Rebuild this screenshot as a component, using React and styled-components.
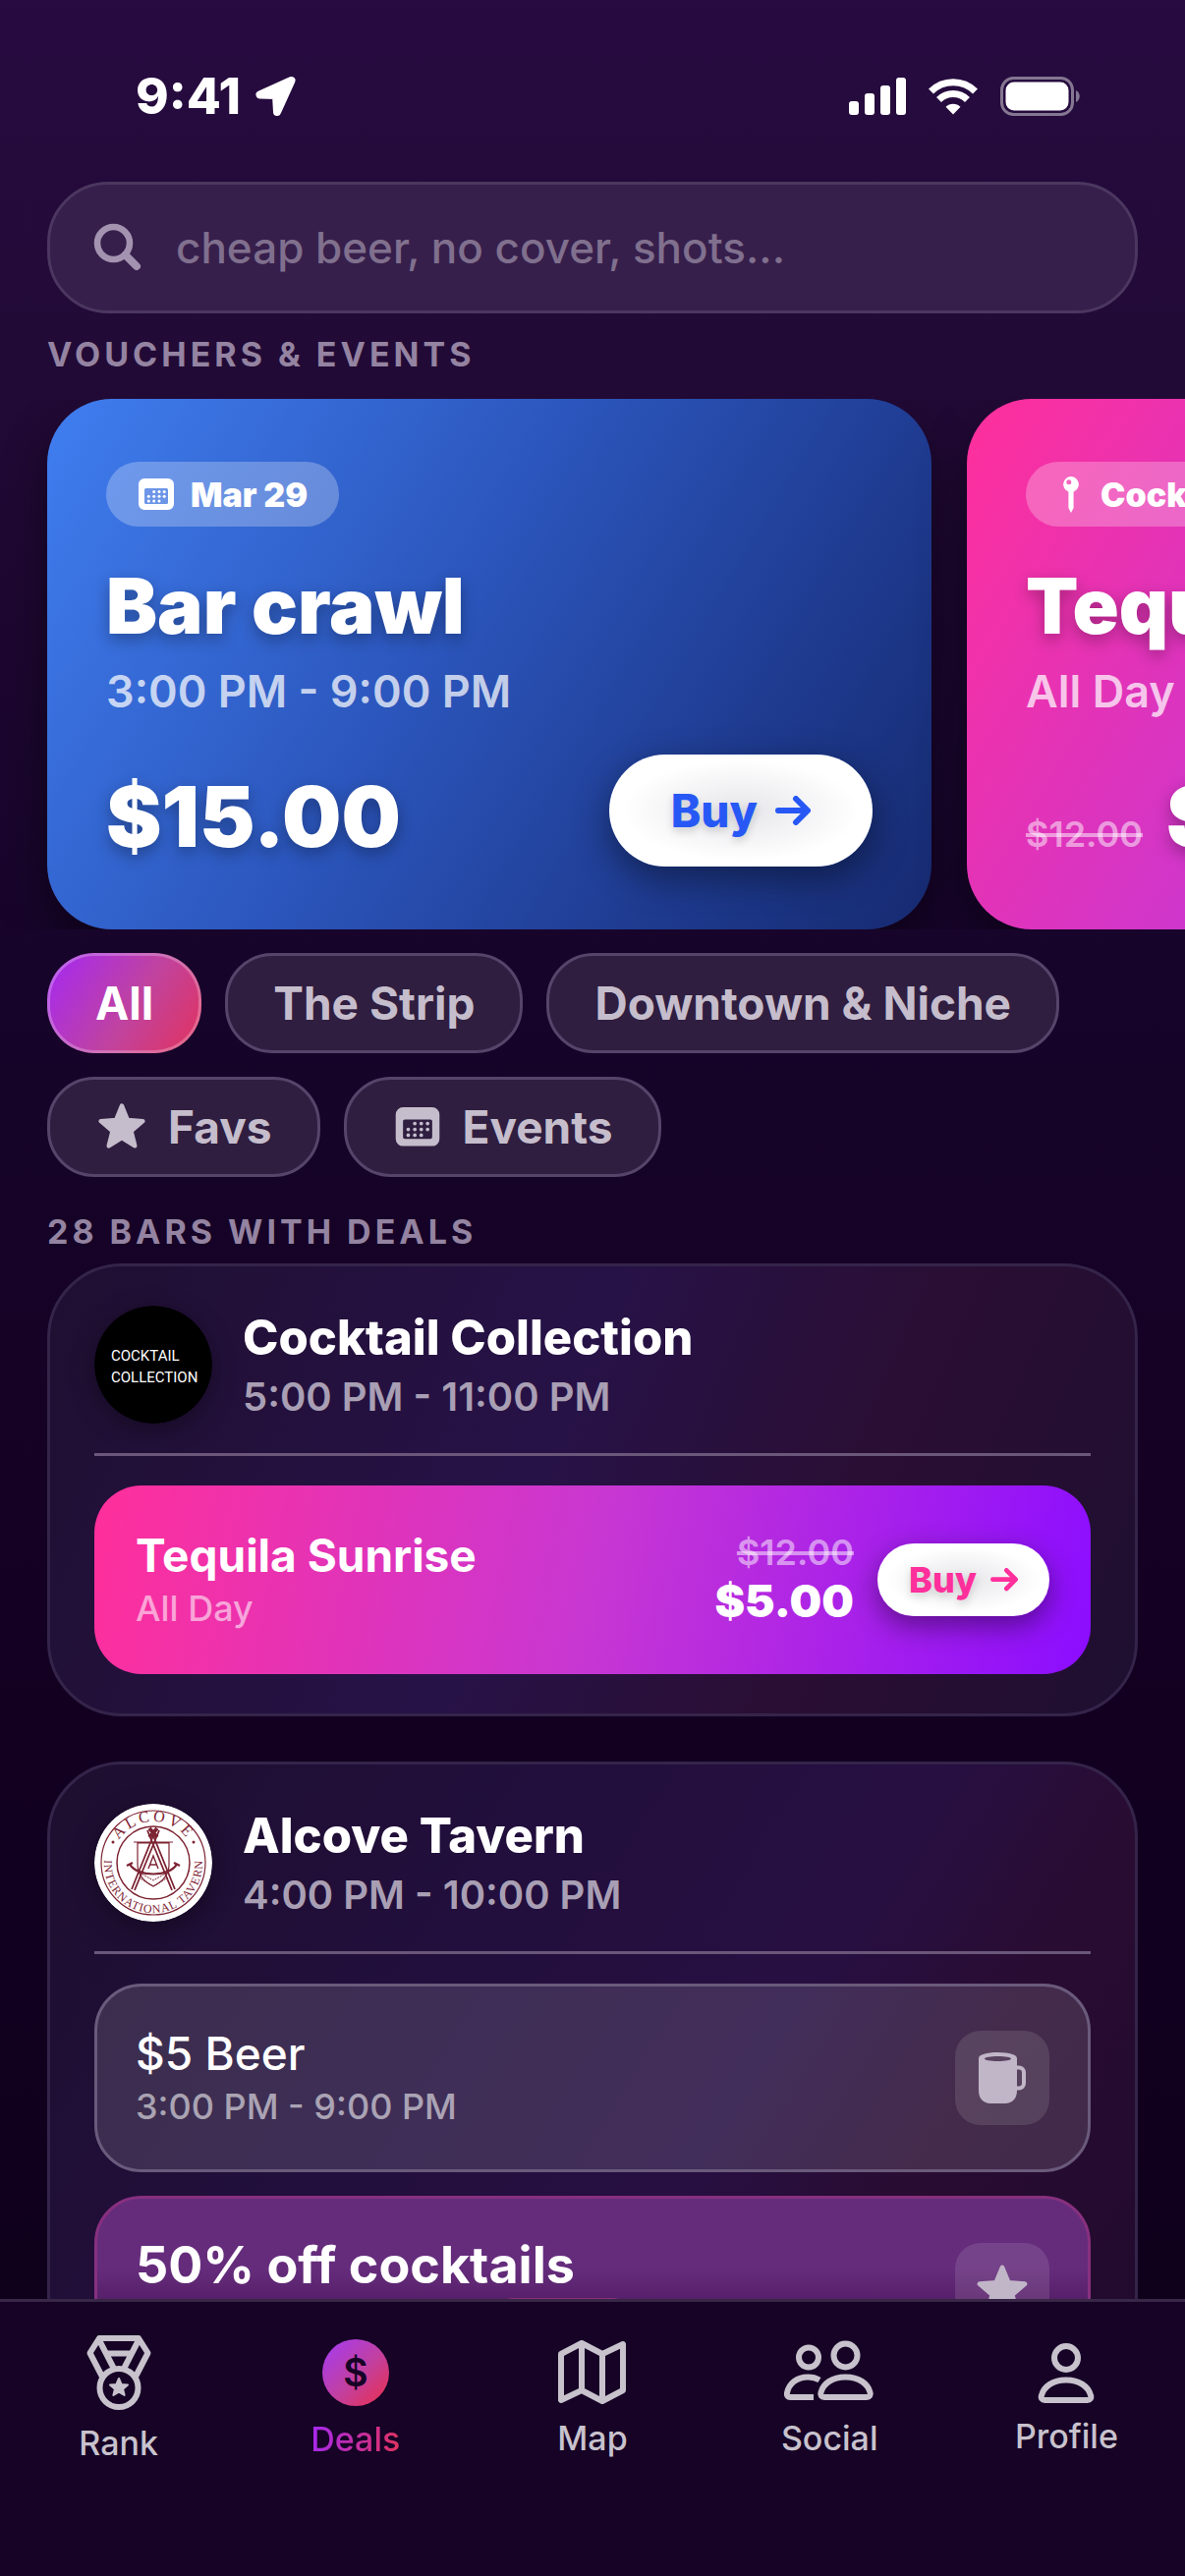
import styled, { createGlobalStyle, css } from 'styled-components';

const GlobalStyle = createGlobalStyle`
  * {
    box-sizing: border-box;
  }
  body {
    margin: 0;
    background: #160326;
    font-family: Inter, Roboto, "Liberation Sans", sans-serif;
    color: #fff;
  }
  h1, h2, h3, p, ul {
    margin: 0;
    padding: 0;
  }
  ul {
    list-style: none;
  }
  button, input {
    font-family: inherit;
  }
  svg {
    display: block;
    flex-shrink: 0;
  }
`;

const Screen = styled.div`
  height: 100vh;
  display: flex;
  flex-direction: column;
  background: linear-gradient(180deg, #270b41 0%, #220a36 14%, #17042a 38%, #130021 66%, #0f001c 90%);
`;

const StatusBar = styled.header`
  display: flex;
  align-items: center;
  justify-content: space-between;
  padding: 66px 106px 55px 138px;
`;

const StatusGroup = styled.div`
  display: flex;
  align-items: center;
  gap: ${({ $gap }) => $gap}px;
`;

const Clock = styled.span`
  font-size: 51px;
  line-height: 64px;
  font-weight: 800;
`;

const Content = styled.main`
  flex: 1;
  min-height: 0;
  overflow-y: auto;
  scrollbar-width: none;
`;

const SearchBox = styled.label`
  display: flex;
  align-items: center;
  gap: 34px;
  height: 134px;
  margin: 0 48px;
  padding: 0 44px;
  border: 3px solid #4b375f;
  border-radius: 62px;
  background: #371f4c;
  color: #a393b0;
`;

const SearchInput = styled.input`
  flex: 1;
  min-width: 0;
  padding: 0;
  border: none;
  outline: none;
  background: transparent;
  color: #fff;
  font-size: 44px;
  font-weight: 500;

  &::placeholder {
    color: #80708e;
    opacity: 1;
  }
`;

const SectionLabel = styled.h2`
  padding: ${({ $top }) => $top}px 48px ${({ $bottom }) => $bottom}px;
  font-size: 34px;
  line-height: 40px;
  font-weight: 700;
  letter-spacing: 4px;
  text-transform: uppercase;
  color: #9483a1;
`;

const Carousel = styled.div`
  display: flex;
  gap: 36px;
  padding: 0 48px;
  overflow-x: auto;
  scrollbar-width: none;
`;

const pink = '#ff2f9b, #c837d2 50%, #8b0dff';
const blue = '#407ef0, #2b55bb 45%, #1f3c92 74%, #162a70';

const VoucherCard = styled.article`
  flex: 0 0 900px;
  height: 540px;
  display: flex;
  flex-direction: column;
  align-items: flex-start;
  padding: 64px 60px;
  border-radius: 66px;
  background: linear-gradient(121deg, ${({ $colors }) => $colors});
  box-shadow: 0 24px 48px rgba(0, 0, 0, 0.45);
`;

const Badge = styled.span`
  display: flex;
  align-items: center;
  gap: 14px;
  height: 66px;
  padding: 0 32px 0 30px;
  border-radius: 33px;
  background: rgba(255, 255, 255, 0.26);
  font-size: 34px;
  font-weight: 900;
  white-space: nowrap;
`;

const VoucherTitle = styled.h3`
  margin-top: 35px;
  font-size: 78px;
  line-height: 92px;
  font-weight: 900;
  white-space: nowrap;
  text-shadow: 0 6px 16px rgba(0, 0, 0, 0.3);
`;

const VoucherTime = styled.p`
  margin-top: 14px;
  font-size: 45px;
  line-height: 54px;
  font-weight: 600;
  color: rgba(255, 255, 255, 0.72);
`;

const VoucherFooter = styled.div`
  align-self: stretch;
  display: flex;
  align-items: center;
  justify-content: space-between;
  height: 114px;
  margin-top: auto;
`;

const PriceLine = styled.div`
  align-self: flex-end;
  display: flex;
  align-items: baseline;
  gap: 24px;
`;

const VoucherPrice = styled.strong`
  font-size: 85px;
  line-height: 100px;
  font-weight: 900;
  text-shadow: 0 6px 16px rgba(0, 0, 0, 0.3);
`;

const OldPrice = styled.s`
  font-size: 36px;
  line-height: 42px;
  font-weight: 600;
  color: rgba(255, 255, 255, 0.5);
  text-decoration-thickness: 4px;
`;

const BuyButton = styled.button`
  display: flex;
  align-items: center;
  justify-content: center;
  border: none;
  background: radial-gradient(closest-side, #e6e6ea, #fff 90%);
  color: ${({ $color }) => $color};
  font-weight: 800;
  text-shadow: 0 4px 8px rgba(0, 0, 0, 0.16);
  cursor: pointer;

  ${({ $small }) =>
    $small
      ? css`
          gap: 14px;
          height: 74px;
          padding: 0 32px;
          border-radius: 37px;
          font-size: 36px;
          box-shadow: 0 10px 28px rgba(0, 0, 0, 0.42);
        `
      : css`
          gap: 18px;
          height: 114px;
          padding: 0 63px;
          border-radius: 57px;
          font-size: 46px;
          box-shadow: 0 12px 36px rgba(0, 0, 0, 0.42);
        `}
`;

const Filters = styled.div`
  display: flex;
  flex-wrap: wrap;
  gap: 24px;
  padding: 24px 48px 0;
`;

const Chip = styled.button`
  display: flex;
  align-items: center;
  gap: 20px;
  height: 102px;
  padding: 0 46px;
  border: 3px solid #56446a;
  border-radius: 48px;
  background: #2f1e40;
  color: #c5bdcc;
  font-size: 46px;
  font-weight: 700;
  cursor: pointer;

  ${({ $active }) =>
    $active &&
    css`
      border-color: rgba(255, 255, 255, 0.25);
      background: linear-gradient(123deg, #a428f4, #c0439f 55%, #e2325c) border-box;
      color: #fff;
    `}
`;

const BarList = styled.div`
  display: flex;
  flex-direction: column;
  gap: 46px;
  padding: 0 48px 48px;
`;

const BarCard = styled.article`
  padding: 40px 45px;
  border: 3px solid #35244a;
  border-radius: 76px;
  background: linear-gradient(${({ $tone }) => $tone}) border-box;
`;

const BarHeader = styled.div`
  display: flex;
  align-items: center;
  gap: 31px;
  padding-bottom: 30px;
  border-bottom: 3px solid #6a5779;
`;

const Logo = styled.svg`
  width: 120px;
  height: 120px;
  border-radius: 50%;
  box-shadow: 0 6px 24px rgba(0, 0, 0, 0.35);
`;

const BarName = styled.h3`
  padding-top: 4px;
  font-size: 49px;
  line-height: 58px;
  font-weight: 800;
`;

const BarHours = styled.p`
  margin-top: 4px;
  font-size: 40px;
  line-height: 54px;
  font-weight: 600;
  color: #a99fb4;
`;

const Deals = styled.ul`
  display: flex;
  flex-direction: column;
  gap: 24px;
  padding-top: 30px;
`;

const dealTones = {
  voucher: css`
    padding: 0 42px;
    background: linear-gradient(101deg, ${pink});
  `,
  plain: css`
    padding: 0 39px;
    border: 3px solid #6a5a7b;
    background: rgba(255, 255, 255, 0.13);
  `,
  featured: css`
    padding: 0 39px;
    border: 3px solid #87307f;
    background: linear-gradient(180deg, #652c7c 38%, #561f68 56%, #4a1a5c);
  `,
};

const Deal = styled.li`
  position: relative;
  display: flex;
  align-items: center;
  gap: 24px;
  min-height: 192px;
  border-radius: 48px;
  ${({ $tone }) => dealTones[$tone]}
`;

const DealText = styled.div`
  flex: 1;
  padding-top: 2px;
`;

const DealTitle = styled.h4`
  margin: 0;
  font-size: ${({ $large }) => ($large ? 52 : 46)}px;
  line-height: 56px;
  font-weight: ${({ $weight }) => $weight};
`;

const DealTime = styled.p`
  font-size: 36px;
  line-height: 52px;
  font-weight: 500;
  color: rgba(255, 255, 255, 0.56);
`;

const DealPrices = styled.div`
  display: flex;
  flex-direction: column;
  align-items: flex-end;
`;

const DealPrice = styled.strong`
  font-size: 46px;
  line-height: 56px;
  font-weight: 900;
`;

const IconTile = styled.span`
  display: grid;
  place-items: center;
  width: 96px;
  height: 96px;
  border-radius: 26px;
  background: rgba(255, 255, 255, 0.11);
  color: #c1b6c8;
`;

/* sits across the lower edge of a featured deal */
const RevealTag = styled.span`
  position: absolute;
  top: 101px;
  left: 47%;
  width: 148px;
  height: 48px;
  transform: translateX(-50%);
  border: 3px solid #87307f;
  border-radius: 24px;
`;

const TabBar = styled.nav`
  display: grid;
  grid-template-columns: repeat(5, 1fr);
  padding-bottom: 81px;
  border-top: 3px solid #382746;
  background: #160326;
`;

const Tab = styled.a`
  height: 198px;
  display: flex;
  flex-direction: column;
  align-items: center;
  justify-content: center;
  gap: 14px;
  color: #c8c2cd;
  font-size: 34px;
  line-height: 40px;
  font-weight: 500;
  text-decoration: none;
`;

const TabLabel = styled.span`
  ${({ $active }) =>
    $active &&
    css`
      background: linear-gradient(100deg, #a428f4, #e2325c);
      background-clip: text;
      color: transparent;
    `}
`;

function StarIcon({ size }) {
  return (
    <svg width={size} height={size} viewBox="0 0 24 24" fill="currentColor" stroke="currentColor" strokeWidth="2" strokeLinejoin="round">
      <path d="M12 2.5l2.6 6.4 6.9.5-5.3 4.5 1.7 6.7-5.9-3.7-5.9 3.7 1.7-6.7-5.3-4.5 6.900-.5z" />
    </svg>
  );
}

function CalendarIcon({ width }) {
  const dots = [[15.7, 13.4], [21, 13.4], [26.2, 13.4], [10.3, 18.2], [15.7, 18.2], [21, 18.2], [26.2, 18.2], [10.3, 23], [15.7, 23], [21, 23]];
  return (
    <svg width={width} height={(width * 32) / 42} viewBox="-3 0 42 32" fill="currentColor">
      <path fillRule="evenodd" d="M6 0h24a6 6 0 0 1 6 6v20a6 6 0 0 1-6 6H6a6 6 0 0 1-6-6V6a6 6 0 0 1 6-6zM7.500 10A1.500 1.500 0 0 0 6 11.500v13A1.500 1.500 0 0 0 7.500 26h21a1.500 1.500 0 0 0 1.500-1.500v-13a1.500 1.500 0 0 0-1.500-1.500z" />
      {dots.map(([x, y]) => (
        <circle key={`${x}-${y}`} cx={x} cy={y} r="1.500" />
      ))}
    </svg>
  );
}

function PinIcon() {
  return (
    <svg width="32" height="38" viewBox="-8 -1 32 38" fill="currentColor">
      <path fillRule="evenodd" d="M8 0a8 8 0 0 1 2.600 15.500V32L8 37l-2.600-5V15.500A8 8 0 0 1 8 0zM5.800 3.200a2.500 2.500 0 1 0 0 5 2.500 2.500 0 0 0 0-5z" />
    </svg>
  );
}

function ArrowIcon({ width }) {
  return (
    <svg width={width} height={(width * 30) / 36} viewBox="0 0 36 30" fill="none" stroke="currentColor" strokeWidth="6" strokeLinecap="round" strokeLinejoin="round">
      <path d="M3 15h29M21 3l12 12-12 12" />
    </svg>
  );
}

function MugIcon() {
  return (
    <svg width="48" height="52" viewBox="0 0 48 52" fill="currentColor">
      <path fillRule="evenodd" d="M0 6C0 2.500 8 0 19.500 0S39 2.500 39 6v33c0 8-5 13-12 13H12C5 52 0 47 0 39zM19.500 4C12 4 6 5 6 6.500S12 9 19.500 9 33 8 33 6.500 27 4 19.500 4z" />
      <path d="M38 15.500h3a5 5 0 0 1 5 5v11a5 5 0 0 1-5 5h-3" fill="none" stroke="currentColor" strokeWidth="4" />
    </svg>
  );
}

function RankIcon() {
  return (
    <svg width="66" height="76" viewBox="0 0 66 76" fill="none" stroke="currentColor" strokeWidth="6" strokeLinejoin="round">
      <path d="M17 44L3.500 18 13 3h40l9.500 15L49 44M13 5l16 31M53 5L37 36M21 18.500h24" />
      <circle cx="33" cy="53.500" r="19.500" />
      <path d="M33 44l2.600 6 6.400.500-4.900 4.200 1.500 6.300-5.600-3.400-5.600 3.400 1.500-6.300-4.900-4.200 6.400-.500z" fill="currentColor" strokeWidth="2" />
    </svg>
  );
}

function CoinIcon() {
  return (
    <svg width="68" height="68" viewBox="0 0 68 68">
      <defs>
        <linearGradient id="coin" x1="0.1" y1="0.1" x2="0.9" y2="0.9">
          <stop offset="0" stopColor="#a93ce6" />
          <stop offset="0.55" stopColor="#c240a0" />
          <stop offset="1" stopColor="#e2325c" />
        </linearGradient>
      </defs>
      <circle cx="34" cy="34" r="34" fill="url(#coin)" />
      <text x="34" y="48" textAnchor="middle" fontSize="39" fontWeight="600" fill="#160326">$</text>
    </svg>
  );
}

function MapIcon() {
  return (
    <svg width="69" height="66" viewBox="0 0 69 66" fill="none" stroke="currentColor" strokeWidth="6" strokeLinejoin="round">
      <path d="M3 14L24 3l21 11L66 4v47L45 62 24 51 3 61zM24 3v48M45 14v48" />
    </svg>
  );
}

function SocialIcon() {
  return (
    <svg width="92" height="66" viewBox="0 0 92 66" fill="none" stroke="currentColor" strokeWidth="6">
      <circle cx="62.500" cy="15.500" r="12" />
      <path d="M37.500 53C40 44 49 37.500 62.500 37.500S85 44 87.500 53c1 3-.500 5-3.500 5H41c-3 0-4.500-2-3.500-5z" />
      <circle cx="25" cy="17.500" r="10" />
      <path d="M30 58H6.500C3.500 58 2.500 56 3 53.500 5 44 13 37.500 24.500 37.500c4.500 0 8 1 11.500 3" />
    </svg>
  );
}

function ProfileIcon() {
  return (
    <svg width="58" height="61" viewBox="0 0 58 61" fill="none" stroke="currentColor" strokeWidth="6">
      <circle cx="29" cy="15" r="12" />
      <path d="M4 53C6.500 44 15.500 37.500 29 37.500S51.500 44 54 53c1 3-.500 5-3.500 5h-43C4.500 58 3 56 4 53z" />
    </svg>
  );
}

function CocktailLogo() {
  return (
    <Logo viewBox="0 0 120 120" role="img" aria-label="Cocktail Collection">
      <circle cx="60" cy="60" r="60" fill="#000" />
      <g fill="#fff" fontFamily='"Liberation Sans Narrow", Roboto, sans-serif' fontSize="15" fontWeight="400">
        <text x="17" y="56">COCKTAIL</text>
        <text x="17" y="78">COLLECTION</text>
      </g>
    </Logo>
  );
}

function AlcoveLogo() {
  return (
    <Logo viewBox="0 0 120 120" role="img" aria-label="Alcove International Tavern">
      <defs>
        <path id="alcove-top" d="M18 60a42 42 0 0 1 84 0" />
        <path id="alcove-bottom" d="M13.800 42a50 50 0 1 0 92.400 0" />
      </defs>
      <circle cx="60" cy="60" r="60" fill="#fff" />
      <g fill="none" stroke="#7d2433">
        <circle cx="60" cy="60" r="53" strokeWidth="1.200" />
        <circle cx="60" cy="60" r="37" strokeWidth="1.500" />
        <path d="M44 40h32v22c0 12-8 18-16 22-8-4-16-10-16-22zM40 39h40" strokeWidth="1.200" />
        <path d="M63 25L38 87M66 27L41 88M57 25l25 62M54 27l25 61" strokeWidth="1.800" />
        <path d="M56 25l8 9M64 25l-8 9" strokeWidth="4" />
        <path d="M36 61c6 14 42 14 48 0M33 63l6-3M87 63l-6-3" strokeWidth="2.200" />
        <path d="M45 75l15 9 15-9M46 70l14 8 14-8" strokeWidth="1" strokeDasharray="2 1" />
        <path d="M55 66l5-13 5 13M57 62h6" strokeWidth="1.400" />
      </g>
      <g fill="#7d2433" fontFamily='"Liberation Serif", serif' textAnchor="middle">
        <text fontSize="16" letterSpacing="3">
          <textPath href="#alcove-top" startOffset="50%">ALCOVE</textPath>
        </text>
        <text fontSize="12" letterSpacing="1">
          <textPath href="#alcove-bottom" startOffset="50%">INTERNATIONAL TAVERN</textPath>
        </text>
      </g>
      <circle cx="19" cy="39" r="1.500" fill="#7d2433" />
      <circle cx="101" cy="39" r="1.500" fill="#7d2433" />
    </Logo>
  );
}

const vouchers = [
  { id: 1, badge: 'Mar 29', icon: <CalendarIcon width={42} />, title: 'Bar crawl', time: '3:00 PM - 9:00 PM', price: '$15.00', colors: blue, buy: '#2758f5' },
  { id: 2, badge: 'Cocktail Collection', icon: <PinIcon />, title: 'Tequila Sunrise', time: 'All Day', oldPrice: '$12.00', price: '$5.00', colors: pink, buy: '#ff2f9b' },
];

const filters = [
  { label: 'All', active: true },
  { label: 'The Strip' },
  { label: 'Downtown & Niche' },
  { label: 'Favs', icon: <StarIcon size={54} /> },
  { label: 'Events', icon: <CalendarIcon width={52} /> },
];

const tabs = [
  { label: 'Rank', icon: <RankIcon /> },
  { label: 'Deals', icon: <CoinIcon />, active: true },
  { label: 'Map', icon: <MapIcon /> },
  { label: 'Social', icon: <SocialIcon /> },
  { label: 'Profile', icon: <ProfileIcon /> },
];

function Status() {
  return (
    <StatusBar>
      <StatusGroup $gap={14}>
        <Clock>9:41</Clock>
        <svg width="43" height="42" viewBox="0 0 43 42" fill="#fff" stroke="#fff" strokeWidth="8" strokeLinejoin="round">
          <path d="M37.500 5L5.500 19.500 22 20l1 17z" />
        </svg>
      </StatusGroup>
      <StatusGroup $gap={23}>
        <svg width="58" height="38" viewBox="0 0 58 38" fill="#fff">
          <rect y="24" width="10" height="14" rx="3" />
          <rect x="16" y="16" width="10" height="22" rx="3" />
          <rect x="32" y="8" width="10" height="30" rx="3" />
          <rect x="48" width="10" height="38" rx="3" />
        </svg>
        <svg width="50" height="38" viewBox="0 0 50 38" fill="none" stroke="#fff" strokeWidth="7">
          <path d="M2.500 14a32 32 0 0 1 45 0M10.500 22.500a20.500 20.500 0 0 1 29 0" />
          <path d="M25 37.500l-7.500-7.700a10.500 10.500 0 0 1 15 0z" fill="#fff" stroke="none" />
        </svg>
        <svg width="82" height="40" viewBox="0 0 82 40">
          <rect x="1.500" y="1.500" width="72" height="37" rx="12" fill="none" stroke="#857691" strokeWidth="3" />
          <rect x="5.500" y="5.500" width="64" height="29" rx="8.500" fill="#fff" />
          <path d="M77 14c5 2 5 10 0 12z" fill="#857691" />
        </svg>
      </StatusGroup>
    </StatusBar>
  );
}

function Voucher({ item }) {
  return (
    <VoucherCard $colors={item.colors}>
      <Badge>
        {item.icon}
        {item.badge}
      </Badge>
      <VoucherTitle>{item.title}</VoucherTitle>
      <VoucherTime>{item.time}</VoucherTime>
      <VoucherFooter>
        <PriceLine>
          {item.oldPrice && <OldPrice>{item.oldPrice}</OldPrice>}
          <VoucherPrice>{item.price}</VoucherPrice>
        </PriceLine>
        <BuyButton $color={item.buy}>
          Buy
          <ArrowIcon width={36} />
        </BuyButton>
      </VoucherFooter>
    </VoucherCard>
  );
}

function Bar({ logo, name, hours, tone, children }) {
  return (
    <BarCard $tone={tone}>
      <BarHeader>
        {logo}
        <div>
          <BarName>{name}</BarName>
          <BarHours>{hours}</BarHours>
        </div>
      </BarHeader>
      <Deals>{children}</Deals>
    </BarCard>
  );
}

export default function App() {
  return (
    <Screen>
      <GlobalStyle />
      <Status />

      <Content>
        <SearchBox>
          <svg width="50" height="50" viewBox="0 0 50 50" fill="none" stroke="currentColor" strokeWidth="6.500" strokeLinecap="round">
            <circle cx="20.500" cy="20.500" r="16.500" />
            <path d="M32.500 32.500L44 44" strokeWidth="8" />
          </svg>
          <SearchInput type="search" aria-label="Search deals" placeholder="cheap beer, no cover, shots..." />
        </SearchBox>

        <SectionLabel $top={22} $bottom={25}>Vouchers &amp; Events</SectionLabel>
        <Carousel>
          {vouchers.map((item) => (
            <Voucher key={item.id} item={item} />
          ))}
        </Carousel>

        <Filters>
          {filters.map(({ label, icon, active }) => (
            <Chip key={label} $active={active}>
              {icon}
              {label}
            </Chip>
          ))}
        </Filters>

        <SectionLabel $top={36} $bottom={12}>28 bars with deals</SectionLabel>
        <BarList>
          <Bar
            logo={<CocktailLogo />}
            name="Cocktail Collection"
            hours="5:00 PM - 11:00 PM"
            tone="113deg, #1f0f31, #271247 45%, #2a0e33 72%, #1e0f30"
          >
            <Deal $tone="voucher">
              <DealText>
                <DealTitle $weight={700}>Tequila Sunrise</DealTitle>
                <DealTime>All Day</DealTime>
              </DealText>
              <DealPrices>
                <OldPrice>$12.00</OldPrice>
                <DealPrice>$5.00</DealPrice>
              </DealPrices>
              <BuyButton $small $color="#ff2f9b">
                Buy
                <ArrowIcon width={28} />
              </BuyButton>
            </Deal>
          </Bar>

          <Bar
            logo={<AlcoveLogo />}
            name="Alcove Tavern"
            hours="4:00 PM - 10:00 PM"
            tone="122deg, #1e0e2f, #220f3d 35%, #270f42 60%, #290c31 75%, #200a2e"
          >
            <Deal $tone="plain">
              <DealText>
                <DealTitle $weight={500}>$5 Beer</DealTitle>
                <DealTime>3:00 PM - 9:00 PM</DealTime>
              </DealText>
              <IconTile>
                <MugIcon />
              </IconTile>
            </Deal>
            <Deal $tone="featured">
              <DealText>
                <DealTitle $weight={700} $large>50% off cocktails</DealTitle>
                <DealTime>4:00 PM - 10:00 PM</DealTime>
              </DealText>
              <IconTile>
                <StarIcon size={58} />
              </IconTile>
              <RevealTag />
            </Deal>
          </Bar>
        </BarList>
      </Content>

      <TabBar>
        {tabs.map(({ label, icon, active }) => (
          <Tab key={label} href={`#${label.toLowerCase()}`} aria-current={active ? 'page' : undefined}>
            {icon}
            <TabLabel $active={active}>{label}</TabLabel>
          </Tab>
        ))}
      </TabBar>
    </Screen>
  );
}
